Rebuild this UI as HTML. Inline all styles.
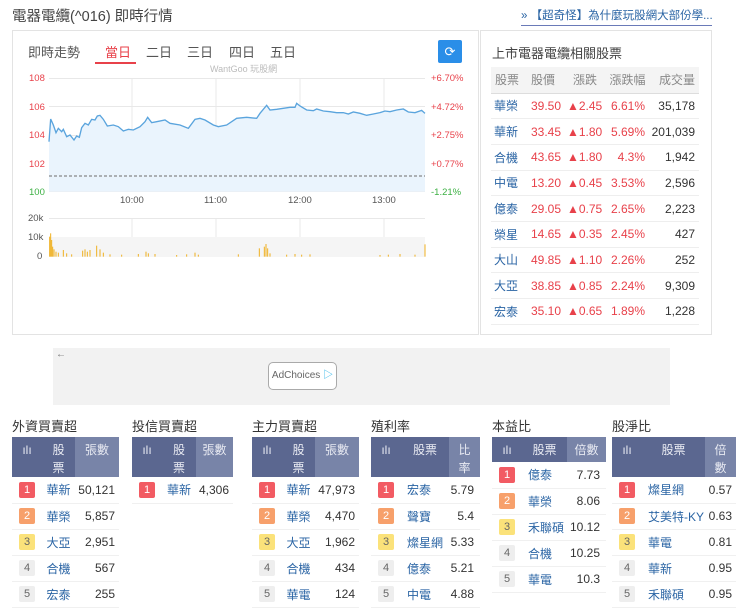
<!DOCTYPE html>
<html><head><meta charset="utf-8"><style>
*{margin:0;padding:0;box-sizing:border-box}
body{width:740px;height:608px;background:#fff;font-family:"Liberation Sans","Noto Sans CJK TC",sans-serif;color:#333;position:relative;overflow:hidden}
.a{position:absolute;white-space:nowrap}
.box{position:absolute;border:1px solid #e3e3e3}
.rt{border-collapse:collapse;position:absolute;left:491px;top:67px;width:208px;table-layout:fixed}
.rt td{height:25.7px;border-bottom:1px solid #eee;font-size:12px;white-space:nowrap;overflow:hidden}
.rt th{height:26px;background:#f4f4f4;color:#888;font-weight:normal;font-size:12px;border-bottom:1px solid #ddd;white-space:nowrap}
.nm{color:#2a64a4}.red{color:#e8414a}
.t{position:absolute;top:437px;border-collapse:collapse;font-size:12px;table-layout:fixed}
.t th{background:#5b6790;color:#e8eaf2;font-weight:normal;font-size:12px;height:40px;vertical-align:top;padding-top:4px;line-height:18px}
.t th.l{background:#7884a8}
.t td{height:26px;border-bottom:1px solid #f0f0f0;white-space:nowrap;overflow:hidden}
.b{display:inline-block;width:16px;height:16px;line-height:16px;text-align:center;font-size:11px;border-radius:2px;color:#666;background:#eee}
.b1{background:#f25b63;color:#fff}.b2{background:#f7a06b;color:#fff}.b3{background:#fbe27a;color:#666}
.ttl{position:absolute;top:416px;font-size:13px;color:#333}
</style></head><body>
<div class="a" style="left:12px;top:5px;font-size:14.5px;color:#444">電器電纜(^016) 即時行情</div>
<div class="a" style="left:521px;top:7px;font-size:11.5px;color:#2a64a4;border-bottom:1px solid #6a7ab8;padding-bottom:2px;width:191px;overflow:hidden">» 【超奇怪】為什麼玩股網大部份學...</div>

<div class="box" style="left:12px;top:30px;width:467px;height:305px"></div>
<div class="a" style="left:28px;top:42px;font-size:13px;color:#555">即時走勢</div>
<div class="a" style="left:105px;top:42px;font-size:13px;color:#e8414a">當日</div>
<div class="a" style="left:95px;top:62px;width:41px;height:2px;background:#e8414a"></div>
<div class="a" style="left:146px;top:42px;font-size:13px;color:#555">二日</div>
<div class="a" style="left:187px;top:42px;font-size:13px;color:#555">三日</div>
<div class="a" style="left:229px;top:42px;font-size:13px;color:#555">四日</div>
<div class="a" style="left:270px;top:42px;font-size:13px;color:#555">五日</div>
<div class="a" style="left:438px;top:40px;width:24px;height:23px;background:#2a8ee8;border-radius:2px;color:#fff;font-size:13px;text-align:center;line-height:23px">⟳</div>

<svg class="a" style="left:0;top:0" width="480" height="270">
<text x="210" y="72" font-size="9" fill="#bbb" font-family="Liberation Sans">WantGoo 玩股網</text>
<g stroke="#e8e8e8" stroke-width="1">
<line x1="49" y1="78.5" x2="425" y2="78.5"/><line x1="49" y1="106.5" x2="425" y2="106.5"/><line x1="49" y1="135.5" x2="425" y2="135.5"/><line x1="49" y1="163.5" x2="425" y2="163.5"/><line x1="49" y1="191.5" x2="425" y2="191.5"/>
<line x1="132" y1="78" x2="132" y2="192"/><line x1="216" y1="78" x2="216" y2="192"/><line x1="300" y1="78" x2="300" y2="192"/><line x1="384" y1="78" x2="384" y2="192"/>
<line x1="49" y1="218.5" x2="425" y2="218.5"/><line x1="49" y1="237.5" x2="425" y2="237.5"/>
<line x1="132" y1="218" x2="132" y2="257"/><line x1="216" y1="218" x2="216" y2="257"/><line x1="300" y1="218" x2="300" y2="257"/><line x1="384" y1="218" x2="384" y2="257"/>
</g>
<rect x="49" y="237" width="376" height="20" fill="#f5f5f5"/>
<g transform="scale(0.33333)">
<polygon fill="#eaf4fd" points="147,575 147,425 152,357 160,375 168,398 175,385 185,395 190,388 200,410 210,405 222,420 230,408 238,412 245,383 255,370 265,375 275,358 285,360 292,348 300,346 310,358 322,378 340,375 355,380 370,393 385,388 400,390 420,380 435,365 443,352 455,368 470,365 495,360 510,370 540,375 565,385 585,358 600,355 615,360 640,375 655,380 680,375 710,355 740,352 770,355 780,340 790,328 800,316 810,330 830,328 850,325 870,322 885,322 890,310 900,318 920,330 940,332 950,327 970,333 990,335 1010,338 1030,338 1045,342 1060,336 1080,340 1100,346 1120,342 1140,338 1155,333 1170,335 1190,330 1210,327 1225,336 1245,338 1265,331 1275,340 1275,575"/>
<polyline fill="none" stroke="#5aa4dd" stroke-width="4" points="147,425 152,357 160,375 168,398 175,385 185,395 190,388 200,410 210,405 222,420 230,408 238,412 245,383 255,370 265,375 275,358 285,360 292,348 300,346 310,358 322,378 340,375 355,380 370,393 385,388 400,390 420,380 435,365 443,352 455,368 470,365 495,360 510,370 540,375 565,385 585,358 600,355 615,360 640,375 655,380 680,375 710,355 740,352 770,355 780,340 790,328 800,316 810,330 830,328 850,325 870,322 885,322 890,310 900,318 920,330 940,332 950,327 970,333 990,335 1010,338 1030,338 1045,342 1060,336 1080,340 1100,346 1120,342 1140,338 1155,333 1170,335 1190,330 1210,327 1225,336 1245,338 1265,331 1275,340"/>
<g stroke="#f0b020" stroke-width="3">
<line x1="149" y1="770" x2="149" y2="710"/><line x1="152" y1="770" x2="152" y2="700"/><line x1="155" y1="770" x2="155" y2="720"/><line x1="158" y1="770" x2="158" y2="740"/><line x1="162" y1="770" x2="162" y2="748"/><line x1="168" y1="770" x2="168" y2="755"/><line x1="175" y1="770" x2="175" y2="758"/><line x1="190" y1="770" x2="190" y2="750"/><line x1="200" y1="770" x2="200" y2="760"/><line x1="215" y1="770" x2="215" y2="763"/><line x1="248" y1="770" x2="248" y2="752"/><line x1="255" y1="770" x2="255" y2="748"/><line x1="262" y1="770" x2="262" y2="755"/><line x1="270" y1="770" x2="270" y2="750"/><line x1="290" y1="770" x2="290" y2="737"/><line x1="300" y1="770" x2="300" y2="748"/><line x1="310" y1="770" x2="310" y2="758"/><line x1="330" y1="770" x2="330" y2="763"/><line x1="365" y1="770" x2="365" y2="764"/><line x1="415" y1="770" x2="415" y2="762"/><line x1="438" y1="770" x2="438" y2="755"/><line x1="445" y1="770" x2="445" y2="760"/><line x1="465" y1="770" x2="465" y2="762"/><line x1="530" y1="770" x2="530" y2="765"/><line x1="560" y1="770" x2="560" y2="763"/><line x1="585" y1="770" x2="585" y2="758"/><line x1="595" y1="770" x2="595" y2="764"/><line x1="715" y1="770" x2="715" y2="763"/><line x1="778" y1="770" x2="778" y2="745"/><line x1="793" y1="770" x2="793" y2="740"/><line x1="798" y1="770" x2="798" y2="732"/><line x1="803" y1="770" x2="803" y2="745"/><line x1="810" y1="770" x2="810" y2="760"/><line x1="860" y1="770" x2="860" y2="764"/><line x1="885" y1="770" x2="885" y2="762"/><line x1="905" y1="770" x2="905" y2="764"/><line x1="930" y1="770" x2="930" y2="763"/><line x1="1140" y1="770" x2="1140" y2="765"/><line x1="1165" y1="770" x2="1165" y2="764"/><line x1="1200" y1="770" x2="1200" y2="762"/><line x1="1245" y1="770" x2="1245" y2="764"/><line x1="1275" y1="770" x2="1275" y2="733"/>
</g>
</g>
<line x1="49" y1="176" x2="425" y2="176" stroke="#888" stroke-width="1.2" stroke-dasharray="3,2"/>
<g font-size="9.5" font-family="Liberation Sans">
<g fill="#e8414a"><text x="29" y="81">108</text><text x="29" y="110">106</text><text x="29" y="138">104</text><text x="29" y="167">102</text>
<text x="431" y="81">+6.70%</text><text x="431" y="110">+4.72%</text><text x="431" y="138">+2.75%</text><text x="431" y="167">+0.77%</text></g>
<g fill="#3cb043"><text x="29" y="195">100</text><text x="431" y="195">-1.21%</text></g>
<g fill="#555"><text x="120" y="203">10:00</text><text x="204" y="203">11:00</text><text x="288" y="203">12:00</text><text x="372" y="203">13:00</text>
<text x="28" y="221">20k</text><text x="28" y="240">10k</text><text x="37" y="259">0</text></g>
</g>
</svg>

<div class="box" style="left:480px;top:30px;width:232px;height:305px"></div>
<div class="a" style="left:492px;top:43px;font-size:13px;color:#444">上市電器電纜相關股票</div>
<table class="rt">
<colgroup><col style="width:36px"><col style="width:40px"><col style="width:38px"><col style="width:45px"><col style="width:49px"></colgroup>
<tr><th style="text-align:left;padding-left:4px">股票</th><th style="text-align:left;padding-left:4px">股價</th><th style="text-align:left;padding-left:6px">漲跌</th><th>漲跌幅</th><th style="text-align:right;padding-right:4px">成交量</th></tr>
<tr><td class="nm" style="padding-left:3px">華榮</td><td class="red" style="padding-left:4px">39.50</td><td class="red">▲2.45</td><td class="red" style="text-align:right;padding-right:5px">6.61%</td><td style="text-align:right;padding-right:4px">35,178</td></tr>
<tr><td class="nm" style="padding-left:3px">華新</td><td class="red" style="padding-left:4px">33.45</td><td class="red">▲1.80</td><td class="red" style="text-align:right;padding-right:5px">5.69%</td><td style="text-align:right;padding-right:4px">201,039</td></tr>
<tr><td class="nm" style="padding-left:3px">合機</td><td class="red" style="padding-left:4px">43.65</td><td class="red">▲1.80</td><td class="red" style="text-align:right;padding-right:5px">4.3%</td><td style="text-align:right;padding-right:4px">1,942</td></tr>
<tr><td class="nm" style="padding-left:3px">中電</td><td class="red" style="padding-left:4px">13.20</td><td class="red">▲0.45</td><td class="red" style="text-align:right;padding-right:5px">3.53%</td><td style="text-align:right;padding-right:4px">2,596</td></tr>
<tr><td class="nm" style="padding-left:3px">億泰</td><td class="red" style="padding-left:4px">29.05</td><td class="red">▲0.75</td><td class="red" style="text-align:right;padding-right:5px">2.65%</td><td style="text-align:right;padding-right:4px">2,223</td></tr>
<tr><td class="nm" style="padding-left:3px">榮星</td><td class="red" style="padding-left:4px">14.65</td><td class="red">▲0.35</td><td class="red" style="text-align:right;padding-right:5px">2.45%</td><td style="text-align:right;padding-right:4px">427</td></tr>
<tr><td class="nm" style="padding-left:3px">大山</td><td class="red" style="padding-left:4px">49.85</td><td class="red">▲1.10</td><td class="red" style="text-align:right;padding-right:5px">2.26%</td><td style="text-align:right;padding-right:4px">252</td></tr>
<tr><td class="nm" style="padding-left:3px">大亞</td><td class="red" style="padding-left:4px">38.85</td><td class="red">▲0.85</td><td class="red" style="text-align:right;padding-right:5px">2.24%</td><td style="text-align:right;padding-right:4px">9,309</td></tr>
<tr><td class="nm" style="padding-left:3px">宏泰</td><td class="red" style="padding-left:4px">35.10</td><td class="red">▲0.65</td><td class="red" style="text-align:right;padding-right:5px">1.89%</td><td style="text-align:right;padding-right:4px">1,228</td></tr>
</table>

<div class="a" style="left:53px;top:348px;width:617px;height:57px;background:#f2f2f2"></div>
<div class="a" style="left:56px;top:349px;font-size:10px;color:#777">←</div>
<div class="a" style="left:268px;top:362px;width:69px;height:28px;border:1px solid #aaa;border-radius:5px;background:#fff;font-size:10px;color:#666;text-align:center;line-height:26px">AdChoices <span style="color:#2ab3e8">▷</span></div>

<div class="ttl" style="left:12px">外資買賣超</div>
<table class="t" style="left:12px;width:107px">
<colgroup><col style="width:30px"><col style="width:33px"><col></colgroup>
<tr><th>ılı</th><th>股<br>票</th><th class="l">張數</th></tr>
<tr><td align="center"><span class="b b1">1</span></td><td class="nm" align="center">華新</td><td align="right" style="padding-right:4px">50,121</td></tr>
<tr><td align="center"><span class="b b2">2</span></td><td class="nm" align="center">華榮</td><td align="right" style="padding-right:4px">5,857</td></tr>
<tr><td align="center"><span class="b b3">3</span></td><td class="nm" align="center">大亞</td><td align="right" style="padding-right:4px">2,951</td></tr>
<tr><td align="center"><span class="b">4</span></td><td class="nm" align="center">合機</td><td align="right" style="padding-right:4px">567</td></tr>
<tr><td align="center"><span class="b">5</span></td><td class="nm" align="center">宏泰</td><td align="right" style="padding-right:4px">255</td></tr>
</table>

<div class="ttl" style="left:132px">投信買賣超</div>
<table class="t" style="left:132px;width:101px">
<colgroup><col style="width:30px"><col style="width:34px"><col></colgroup>
<tr><th>ılı</th><th>股<br>票</th><th class="l">張數</th></tr>
<tr><td align="center"><span class="b b1">1</span></td><td class="nm" align="center">華新</td><td align="right" style="padding-right:4px">4,306</td></tr>
</table>

<div class="ttl" style="left:252px">主力買賣超</div>
<table class="t" style="left:252px;width:107px">
<colgroup><col style="width:30px"><col style="width:33px"><col></colgroup>
<tr><th>ılı</th><th>股<br>票</th><th class="l">張數</th></tr>
<tr><td align="center"><span class="b b1">1</span></td><td class="nm" align="center">華新</td><td align="right" style="padding-right:4px">47,973</td></tr>
<tr><td align="center"><span class="b b2">2</span></td><td class="nm" align="center">華榮</td><td align="right" style="padding-right:4px">4,470</td></tr>
<tr><td align="center"><span class="b b3">3</span></td><td class="nm" align="center">大亞</td><td align="right" style="padding-right:4px">1,962</td></tr>
<tr><td align="center"><span class="b">4</span></td><td class="nm" align="center">合機</td><td align="right" style="padding-right:4px">434</td></tr>
<tr><td align="center"><span class="b">5</span></td><td class="nm" align="center">華電</td><td align="right" style="padding-right:4px">124</td></tr>
</table>

<div class="ttl" style="left:371px">殖利率</div>
<table class="t" style="left:371px;width:109px">
<colgroup><col style="width:30px"><col style="width:48px"><col></colgroup>
<tr><th>ılı</th><th>股票</th><th class="l">比<br>率</th></tr>
<tr><td align="center"><span class="b b1">1</span></td><td class="nm" style="padding-left:6px">宏泰</td><td align="right" style="padding-right:6px">5.79</td></tr>
<tr><td align="center"><span class="b b2">2</span></td><td class="nm" style="padding-left:6px">聲寶</td><td align="right" style="padding-right:6px">5.4</td></tr>
<tr><td align="center"><span class="b b3">3</span></td><td class="nm" style="padding-left:6px">燦星網</td><td align="right" style="padding-right:6px">5.33</td></tr>
<tr><td align="center"><span class="b">4</span></td><td class="nm" style="padding-left:6px">億泰</td><td align="right" style="padding-right:6px">5.21</td></tr>
<tr><td align="center"><span class="b">5</span></td><td class="nm" style="padding-left:6px">中電</td><td align="right" style="padding-right:6px">4.88</td></tr>
</table>

<div class="ttl" style="left:492px">本益比</div>
<table class="t" style="left:492px;width:114px">
<colgroup><col style="width:30px"><col style="width:45px"><col></colgroup>
<tr><th style="height:25px">ılı</th><th style="height:25px">股票</th><th class="l" style="height:25px">倍數</th></tr>
<tr><td align="center"><span class="b b1">1</span></td><td class="nm" style="padding-left:6px">億泰</td><td align="right" style="padding-right:6px">7.73</td></tr>
<tr><td align="center"><span class="b b2">2</span></td><td class="nm" style="padding-left:6px">華榮</td><td align="right" style="padding-right:6px">8.06</td></tr>
<tr><td align="center"><span class="b b3">3</span></td><td class="nm" style="padding-left:6px">禾聯碩</td><td align="right" style="padding-right:6px">10.12</td></tr>
<tr><td align="center"><span class="b">4</span></td><td class="nm" style="padding-left:6px">合機</td><td align="right" style="padding-right:6px">10.25</td></tr>
<tr><td align="center"><span class="b">5</span></td><td class="nm" style="padding-left:6px">華電</td><td align="right" style="padding-right:6px">10.3</td></tr>
</table>

<div class="ttl" style="left:612px">股淨比</div>
<table class="t" style="left:612px;width:124px">
<colgroup><col style="width:30px"><col style="width:63px"><col></colgroup>
<tr><th>ılı</th><th>股票</th><th class="l">倍<br>數</th></tr>
<tr><td align="center"><span class="b b1">1</span></td><td class="nm" style="padding-left:6px">燦星網</td><td align="right" style="padding-right:4px">0.57</td></tr>
<tr><td align="center"><span class="b b2">2</span></td><td class="nm" style="padding-left:6px">艾美特-KY</td><td align="right" style="padding-right:4px">0.63</td></tr>
<tr><td align="center"><span class="b b3">3</span></td><td class="nm" style="padding-left:6px">華電</td><td align="right" style="padding-right:4px">0.81</td></tr>
<tr><td align="center"><span class="b">4</span></td><td class="nm" style="padding-left:6px">華新</td><td align="right" style="padding-right:4px">0.95</td></tr>
<tr><td align="center"><span class="b">5</span></td><td class="nm" style="padding-left:6px">禾聯碩</td><td align="right" style="padding-right:4px">0.95</td></tr>
</table>
</body></html>
